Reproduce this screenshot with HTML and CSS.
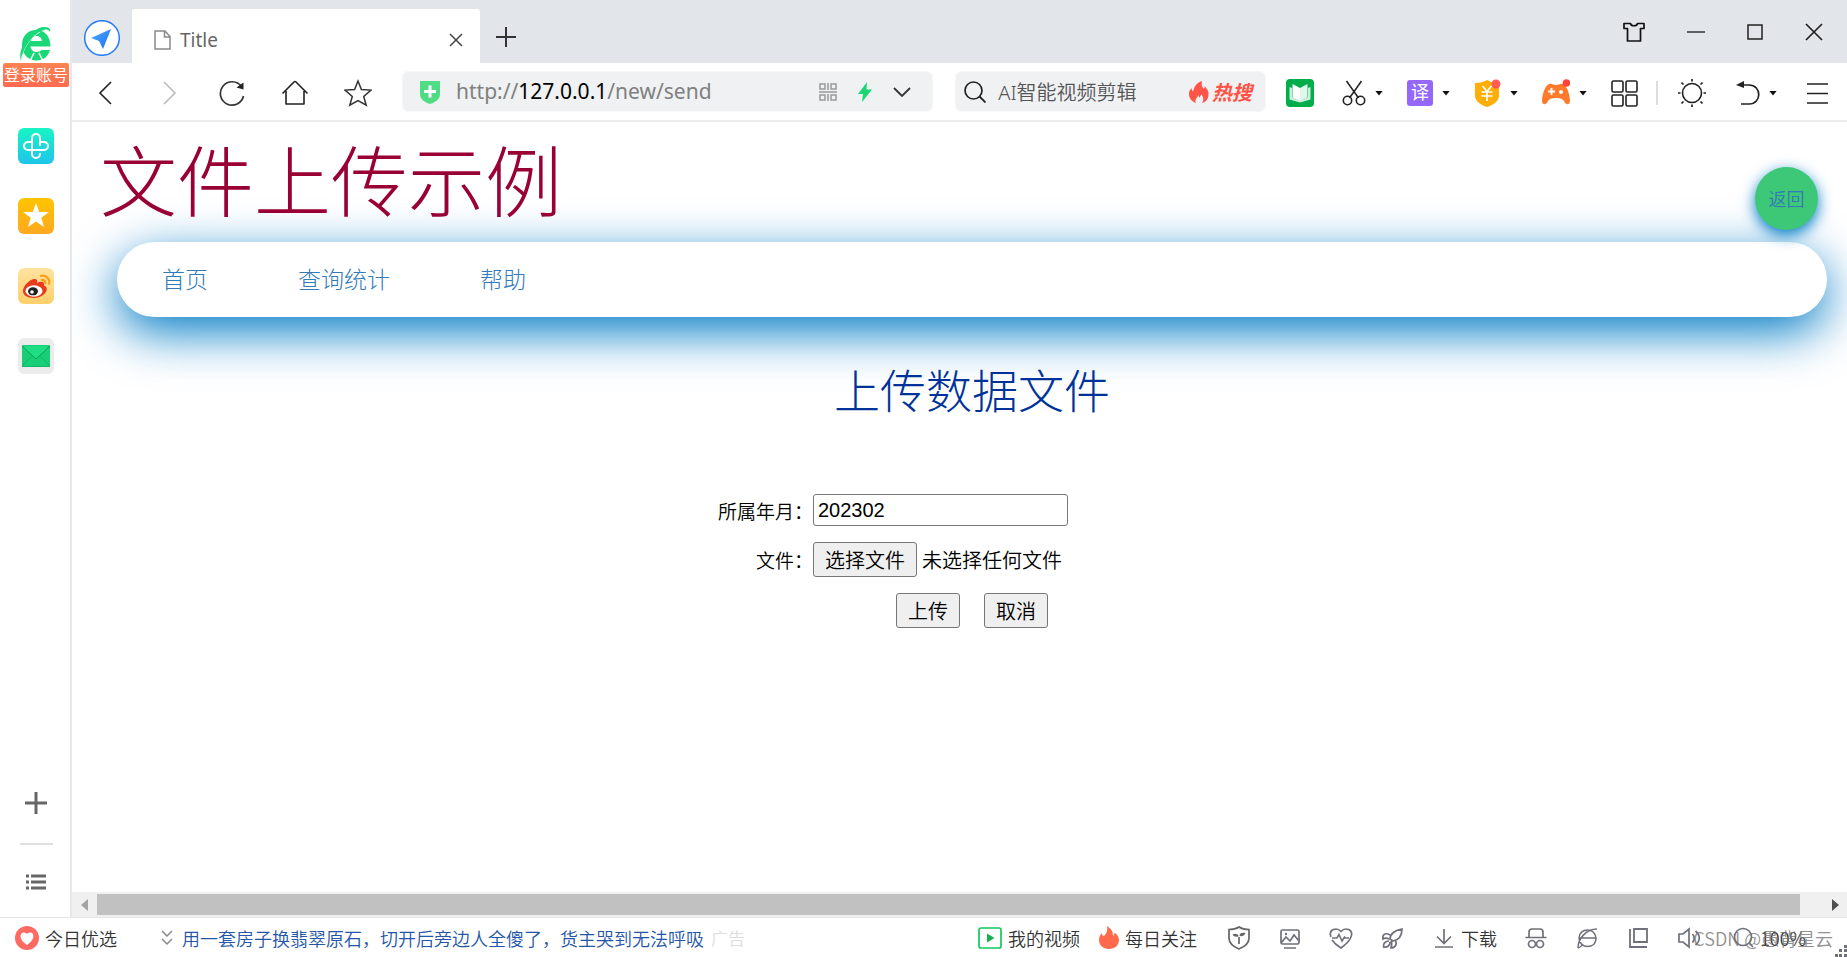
FILE: index.html
```html
<!DOCTYPE html>
<html lang="zh-CN">
<head>
<meta charset="utf-8">
<title>Title</title>
<link rel="stylesheet" href="styles.css">
</head>
<body>
<div class="browser">
  <aside class="side">
    <a class="account" href="#">
      <svg class="logo" width="36" height="36" viewBox="0 0 36 36"><path d="M4 19C4 10 10 4 18 4c8 0 14.500 5.500 14.500 16.500H12.500c.5 3.500 3 5.500 6 5.500 2.500 0 4-1 5-2H32C30 31 25 34.500 18.500 34.500 10 34.500 4 28 4 19Zm9-4h11c-.5-3.500-2.500-5-5.500-5S13.600 11.500 13 15Z" fill="#18d878"/><path d="M3.500 34C2 25 11 11 22 5" fill="none" stroke="#fff" stroke-width="2.500"/><path d="M3 35C-1 24 12 2 26 1c5-.3 7 2 6 5-1-2-3-3-6-2C15 7 4 23 3 35Z" fill="#18d878"/><path d="m16 27-4 8M21 27l4 8" stroke="#fff" stroke-width="1.500"/></svg>
      <span class="badge">登录账号</span>
    </a>
    <nav class="apps">
      <button class="app" aria-label="健康"><svg width="36" height="36" viewBox="0 0 36 36"><defs><linearGradient id="ga" x2="0" y2="1"><stop stop-color="#18f5c4"/><stop offset="1" stop-color="#1fc3ea"/></linearGradient></defs><rect width="36" height="36" rx="6" fill="url(#ga)"/><path d="M22 18V10a4 4 0 0 0-8 0v12H10a4 4 0 0 1 0-8h4M14 22h12a4 4 0 0 0 0-8h-4M14 18v8a4 4 0 0 0 8 0v-1" fill="none" stroke="#fff" stroke-width="2"/></svg></button>
      <button class="app" aria-label="收藏"><svg width="36" height="36" viewBox="0 0 36 36"><defs><linearGradient id="gb" x2="0" y2="1"><stop stop-color="#ffc400"/><stop offset="1" stop-color="#ffa820"/></linearGradient></defs><rect width="36" height="36" rx="6" fill="url(#gb)"/><path d="m18 5 3.200 9H31l-7.700 5.700L26 29l-8-5.600L10 29l2.700-9.300L5 14h9.800Z" fill="#fff"/></svg></button>
      <button class="app" aria-label="微博"><svg width="36" height="36" viewBox="0 0 36 36"><defs><linearGradient id="gc" x2="0" y2="1"><stop stop-color="#ffe3a0"/><stop offset="1" stop-color="#ffd06a"/></linearGradient></defs><rect width="36" height="36" rx="6" fill="url(#gc)"/><path d="M5 23c0-5 6-11 11-12 3-.5 4 1.500 3 4 4-2 8-1.500 7 2.500 6 2 2 12-10 12.500C9 30 5 27 5 23Z" fill="#e83a1c"/><ellipse cx="16" cy="23" rx="8.500" ry="5.800" fill="#fff"/><ellipse cx="15" cy="23.300" rx="5" ry="4" fill="#222"/><circle cx="14" cy="24" r="1.800" fill="#fff"/><path d="M22 8c6-1.500 10.500 3 9 8.500M23 12c3-.7 5 1.500 4.300 4" fill="none" stroke="#f4a21c" stroke-width="2.200"/></svg></button>
      <button class="app" aria-label="邮件"><svg width="36" height="36" viewBox="0 0 36 36"><rect width="36" height="36" rx="6" fill="#ececec"/><rect x="4" y="7" width="28" height="22" rx="1" fill="#18cf78"/><path d="M4 8h28L18 21Z" fill="#1fdd83"/><path d="m4 8 14 13L32 8" fill="none" stroke="#0a9e58" stroke-width="1"/><path d="m4 28 10-10M32 28 22 18M4 28.500h28" fill="none" stroke="#12b468" stroke-width="1"/></svg></button>
    </nav>
    <div class="side-tools">
      <button class="tool" aria-label="添加"><svg width="22" height="22" viewBox="0 0 22 22"><path d="M11 0v22M0 11h22" stroke="#666" stroke-width="3"/></svg></button>
      <hr class="rule">
      <button class="tool" aria-label="列表"><svg width="20" height="16" viewBox="0 0 20 16"><path d="M0 2h3M5 2h15M0 8h3M5 8h15M0 14h3M5 14h15" stroke="#666" stroke-width="3"/></svg></button>
    </div>
  </aside>

  <section class="window">
    <header class="tabs">
      <button class="guide" aria-label="导航"><svg width="36" height="36" viewBox="0 0 36 36"><defs><linearGradient id="gd" x2="1" y2="1"><stop stop-color="#4cb0ff"/><stop offset="1" stop-color="#1f6cf5"/></linearGradient></defs><circle cx="18" cy="18" r="17.300" fill="#fff" stroke="#2a7cf6" stroke-width="1.500"/><path d="M27 9 7 18l8 3 4 8Z" fill="url(#gd)"/></svg></button>
      <div class="tab">
        <svg width="17" height="20" viewBox="0 0 17 20"><path d="M1 1h10l5 5.500V19H1ZM10.500 1v6H16" fill="none" stroke="#8a8a8a" stroke-width="1.500"/></svg>
        <span class="tab-title">Title</span>
        <button aria-label="关闭标签"><svg width="14" height="14" viewBox="0 0 14 14"><path d="m1 1 12 12M13 1 1 13" stroke="#444" stroke-width="1.500"/></svg></button>
      </div>
      <button class="new-tab" aria-label="新标签"><svg width="20" height="20" viewBox="0 0 20 20"><path d="M10 0v20M0 10h20" stroke="#333" stroke-width="2"/></svg></button>
      <div class="win-buttons">
        <button aria-label="皮肤"><svg width="22" height="20" viewBox="0 0 22 20"><path d="M1 1.500h6.500c.5 3 6.500 3 7 0H21v5h-3.500V19h-13V6.500H1Z" fill="none" stroke="#111" stroke-width="1.700" stroke-linejoin="round"/></svg></button>
        <button aria-label="最小化"><svg width="18" height="18" viewBox="0 0 18 18"><path d="M0 9h18" stroke="#333" stroke-width="1.500"/></svg></button>
        <button aria-label="最大化"><svg width="16" height="16" viewBox="0 0 16 16"><path d="M1 1h14v14H1Z" fill="none" stroke="#222" stroke-width="1.500"/></svg></button>
        <button aria-label="关闭"><svg width="18" height="18" viewBox="0 0 18 18"><path d="m1 1 16 16M17 1 1 17" stroke="#222" stroke-width="1.700"/></svg></button>
      </div>
    </header>

    <div class="toolbar">
      <div class="history">
        <button aria-label="后退"><svg width="28" height="28" viewBox="0 0 28 28"><path d="M19 3 8 14l11 11" fill="none" stroke="#222" stroke-width="1.600"/></svg></button>
        <button aria-label="前进"><svg width="28" height="28" viewBox="0 0 28 28"><path d="m9 3 11 11L9 25" fill="none" stroke="#bbb" stroke-width="1.600"/></svg></button>
        <button aria-label="刷新"><svg width="28" height="28" viewBox="0 0 28 28"><path d="M23.500 7.500A11.700 11.700 0 1 0 25.500 17" fill="none" stroke="#333" stroke-width="1.700"/><path d="M25.500 3.500v7l-7-2Z" fill="#222"/></svg></button>
        <button aria-label="主页"><svg width="28" height="28" viewBox="0 0 28 28"><path d="M1.500 14.500 13 3q1-1 2 0l11.500 11.500M5 12v13h18V12" fill="none" stroke="#222" stroke-width="1.600" stroke-linejoin="round"/></svg></button>
        <button aria-label="收藏本页"><svg width="28" height="28" viewBox="0 0 28 28"><path d="m14 2 3.400 8.500 9.600.6-7.300 6.300 2.500 8.800L14 21.500l-8.200 4.700 2.500-8.800L1 11.100l9.600-.6Z" fill="none" stroke="#333" stroke-width="1.500"/></svg></button>
      </div>
      <div class="address">
        <svg width="22" height="24" viewBox="0 0 22 24"><path d="M1 1h20v13c0 5-4 8-10 10C5 22 1 19 1 14Z" fill="#4fdc84"/><path d="M11 5.500v12M5 11.500h12" stroke="#fff" stroke-width="3"/></svg>
        <div class="url" role="textbox" aria-label="地址">http://<b>127.0.0.1</b>/new/send</div>
        <div class="address-tools">
          <svg width="18" height="18" viewBox="0 0 18 18"><path d="M1 1h5v5H1ZM12 1h5v5h-5ZM1 12h5v5H1ZM12 12h5v5h-5ZM9 0v7M9 11v7M0 9h18" fill="none" stroke="#999" stroke-width="1.500"/></svg>
          <svg width="14" height="20" viewBox="0 0 14 20"><path d="M9 0 0 12h5L4 20l10-12.500H8.500Z" fill="#1bd673"/></svg>
          <svg width="18" height="10" viewBox="0 0 18 10"><path d="m1 1 8 8 8-8" fill="none" stroke="#333" stroke-width="1.800"/></svg>
        </div>
      </div>
      <div class="search">
        <svg width="22" height="22" viewBox="0 0 22 22"><circle cx="9.500" cy="9.500" r="8.500" fill="none" stroke="#222" stroke-width="1.700"/><path d="m15.500 15.500 6 6" stroke="#222" stroke-width="1.800"/></svg>
        <input class="search-text" aria-label="搜索" value="AI智能视频剪辑">
        <svg width="20" height="22" viewBox="0 0 20 22"><path d="M7 22C2 20 0 17 0 13c0-3 1-4.500 2.500-6 0 2 .7 3 1.700 3.500C5 6 7.500 1.500 13 0c-1 4 0 6 2 8 .5-1 .7-1.500.6-2.800C18 7.500 20 10.500 19.500 14c-.3 4-2.500 7-6.500 8 2-3 1.800-5.500-.8-9-.3 2-1 3-2 3.500-.2-1-.5-1.800-1.200-2.500C9 17 5 18 7 22Z" fill="#ff5548"/></svg>
        <a class="hot" href="#">热搜</a>
      </div>
      <div class="extras">
        <button aria-label="小说"><svg width="28" height="28" viewBox="0 0 28 28"><rect width="28" height="28" rx="4" fill="#04ad4c"/><path d="M3.500 8v12.500L14 23.500l10.500-3V8L22 9v9l-8 3-8-3V9Z" fill="#cdeedb"/><path d="m6.500 5 7.500 4v12.500l-7.500-3.300Z" fill="#fff"/><path d="M21.500 5 14 9v12.500l7.500-3.300Z" fill="#e2f6ea"/></svg></button>
        <div class="plugins">
          <button aria-label="截图"><svg width="24" height="26" viewBox="0 0 24 26"><path d="m4.500 1 12 17M19.500 1l-12 17" stroke="#222" stroke-width="1.500"/><g fill="none" stroke="#222" stroke-width="1.600"><circle cx="5.500" cy="20.500" r="4.200"/><circle cx="18.500" cy="20.500" r="4.200"/></g></svg><i class="caret"></i></button>
          <button aria-label="翻译"><span class="translate">译</span><i class="caret"></i></button>
          <button aria-label="优惠"><svg width="27" height="28" viewBox="0 0 27 28"><path d="M13 1c3 2 7 3 12 3v13c0 5-6 9-12 11C7 26 1 22 1 17V4c5 0 9-1 12-3Z" fill="#ffae05"/><path d="m8.500 7 4.500 5.500L17.500 7M7.500 13h11M7.500 17h11M13 12.500V22" fill="none" stroke="#fff" stroke-width="1.700"/><circle cx="22" cy="5" r="4.500" fill="#ff5c55"/></svg><i class="caret"></i></button>
          <button aria-label="游戏"><svg width="28" height="28" viewBox="0 0 28 28"><path d="M7 5c3-1 4 1 7 1s4-2 7-1c4 1.500 7 11 7 17 0 4-4 4-5.500 1S19 19 14 19s-7 1-8.500 4S0 26 0 22C0 16 3 6.500 7 5Z" fill="#ff7a2b"/><path d="M9.500 9v7M6 12.500h7" stroke="#fff" stroke-width="2"/><circle cx="19" cy="13" r="2" fill="#fff"/><circle cx="24.500" cy="4" r="3.800" fill="#ff4338"/></svg><i class="caret"></i></button>
          <button aria-label="扩展"><svg width="27" height="27" viewBox="0 0 27 27"><g fill="none" stroke="#222" stroke-width="1.600"><rect x="1" y="1" width="11" height="11" rx="1.500"/><rect x="15" y="1" width="11" height="11" rx="1.500"/><rect x="1" y="15" width="11" height="11" rx="1.500"/><rect x="15" y="15" width="11" height="11" rx="1.500"/></g></svg></button>
        </div>
        <span class="divider"></span>
        <div class="actions">
          <button aria-label="亮度"><svg width="28" height="28" viewBox="0 0 28 28"><circle cx="14" cy="14" r="9.500" fill="none" stroke="#222" stroke-width="1.600"/><path d="M14 0v2.500M14 25.500V28M0 14h2.500M25.500 14H28M3.500 3.500l2 2M22.500 22.500l2 2M24.500 3.500l-2 2M5.500 22.500l-2 2" stroke="#222" stroke-width="1.700"/></svg></button>
          <button aria-label="恢复"><svg width="24" height="26" viewBox="0 0 24 26"><path d="M4 5h9c13 0 13 19 0 19H5" fill="none" stroke="#222" stroke-width="1.700"/><path d="M0 5 8 1v7Z" fill="#222"/></svg><i class="caret"></i></button>
          <button aria-label="菜单"><svg width="21" height="21" viewBox="0 0 21 21"><path d="M0 1h21M0 10.500h21M0 20h21" stroke="#222" stroke-width="1.600"/></svg></button>
        </div>
      </div>
    </div>

    <main class="page">
      <h1 class="headline">文件上传示例</h1>
      <a class="back" href="#">返回</a>
      <nav class="menu">
        <a href="#">首页</a>
        <a href="#">查询统计</a>
        <a href="#">帮助</a>
      </nav>
      <h2 class="subtitle">上传数据文件</h2>
      <form class="upload">
        <label for="month">所属年月：</label>
        <div class="field"><input class="month" id="month" type="text" value="202302"></div>
        <label for="choose">文件：</label>
        <div class="field"><button class="btn" id="choose" type="button">选择文件</button><span>未选择任何文件</span></div>
        <div class="submit"><button class="btn" type="button">上传</button><button class="btn" type="reset">取消</button></div>
      </form>
    </main>

    <div class="scroll">
      <svg width="7" height="12" viewBox="0 0 7 12"><path d="M7 0v12L0 6Z" fill="#a3a3a3"/></svg>
      <span class="thumb"></span>
      <svg width="7" height="12" viewBox="0 0 7 12"><path d="M0 0v12l7-6Z" fill="#505050"/></svg>
    </div>
  </section>
</div>

<footer class="status">
  <a class="pick" href="#"><svg width="24" height="24" viewBox="0 0 24 24"><circle cx="12" cy="12" r="12" fill="#ff6b63"/><path d="M12 19C2 12 6 6 9 6.500c2 0 3 1.500 3 2 0-.5 1-2 3-2 3-.5 7 5.500-3 12.500Z" fill="#fff"/></svg>今日优选</a>
  <a class="news" href="#"><svg width="12" height="16" viewBox="0 0 12 16"><path d="m1 1 5 5 5-5M1 9l5 5 5-5" fill="none" stroke="#888" stroke-width="1.500"/></svg>用一套房子换翡翠原石，切开后旁边人全傻了，货主哭到无法呼吸</a>
  <span class="ad">广告</span>
  <div class="feeds">
    <a href="#"><svg width="24" height="22" viewBox="0 0 24 22"><rect x="1" y="1" width="22" height="20" rx="2" fill="none" stroke="#12c95c" stroke-width="1.700"/><path d="m9 6.500 7.500 4.500L9 15.500Z" fill="#12b050"/></svg>我的视频</a>
    <a href="#"><svg width="20" height="23" viewBox="0 0 20 23"><path d="M8 0c5 3 6 6 6 10 1-1 1.500-2 1.500-3.500C18 8 20 11 20 14c0 5-4 9-10 9S0 19 0 14c0-3 1-5 3-7 0 2 .5 3 2 3 2-2 4-5 3-10Z" fill="#ff6a4d"/></svg>每日关注</a>
  </div>
  <div class="gadgets">
    <button aria-label="防护"><svg width="24" height="24" viewBox="0 0 24 24"><path d="M12 1c3 2 6 2.500 10 2.500V12c0 5-4 8.500-10 11C6 20.500 2 17 2 12V3.500C6 3.500 9 3 12 1Z" fill="none" stroke="#666" stroke-width="1.700"/><path d="M12 18v-7" stroke="#666" stroke-width="1.700"/><path d="M5.500 8.500c3-1.500 6-.5 6 2-3 .5-5 0-6-2ZM18.500 7C15 6 12.500 7 12.500 10c3 .5 5.500-.5 6-3Z" fill="#666"/></svg></button>
    <button aria-label="图片"><svg width="24" height="24" viewBox="0 0 24 24"><rect x="3" y="4" width="18" height="14" rx="1.500" fill="none" stroke="#70707a" stroke-width="1.700"/><path d="m3 17 5-6 4 4 4-6 5 6M6 22h12" fill="none" stroke="#70707a" stroke-width="1.700"/><circle cx="8" cy="8" r="1.200" fill="#70707a"/></svg></button>
    <button aria-label="体检"><svg width="24" height="24" viewBox="0 0 24 24"><path d="M2 11C-1 3 8 1 12 5.500 16 1 25 3 22 11c-1.500 4-6 8-10 11-4-2.500-7-5-9-8M3 12h5l2-3.500 3 6.500 2.500-4 1 1H20" fill="none" stroke="#70707a" stroke-width="1.600"/></svg></button>
    <button aria-label="加速"><svg width="24" height="24" viewBox="0 0 24 24"><path d="M10 13C10 8 15 4 22 3c0 7-4 11-9 12ZM10 9C5 6 2 9 3 13c2-1.500 4-1 6 0M15 14c3 4 0 8-4 8 1-3 1-5 0-7M9 15c-4 0-6 3-5.500 6C7 21.500 10 20 10 16" fill="none" stroke="#70707a" stroke-width="1.700"/></svg></button>
  </div>
  <a class="download" href="#"><svg width="18" height="20" viewBox="0 0 18 20"><path d="M9 1v14M2 8.500 9 15.500l7-7M0 19h18" fill="none" stroke="#70707a" stroke-width="1.700"/></svg>下载</a>
  <div class="gadgets modes">
    <button aria-label="无痕"><svg width="24" height="24" viewBox="0 0 24 24"><path d="M1.500 11.500h21M5 11V6q0-3 3-3h8q3 0 3 3v5" fill="none" stroke="#70707a" stroke-width="1.700"/><circle cx="8" cy="18" r="3.500" fill="none" stroke="#70707a" stroke-width="1.700"/><circle cx="16" cy="18" r="3.500" fill="none" stroke="#70707a" stroke-width="1.700"/></svg></button>
    <button aria-label="内核"><svg width="24" height="24" viewBox="0 0 24 24"><path d="M4 12h17c0 6-4 8.500-8.500 8.500S4 17 4 12s4-8 8.500-8 7.500 2 8.500 8M3 22C3 13 11 3 22 3M3 22c2-.5 3-1 4-3" fill="none" stroke="#70707a" stroke-width="1.500"/></svg></button>
    <button aria-label="窗口"><svg width="24" height="24" viewBox="0 0 24 24"><path d="M8 3h13v13H8ZM4 3v18h17" fill="none" stroke="#70707a" stroke-width="1.800"/></svg></button>
    <button aria-label="声音"><svg width="24" height="24" viewBox="0 0 24 24"><path d="M2 8h4l6-5v18l-6-5H2ZM15.500 8c2 2.500 2 6 0 8.500M18.500 5c5 4 5 10 0 14" fill="none" stroke="#70707a" stroke-width="1.700"/></svg></button>
  </div>
  <button class="zoom"><svg width="22" height="22" viewBox="0 0 22 22"><circle cx="10" cy="10" r="8.500" fill="none" stroke="#70707a" stroke-width="1.700"/><path d="m16 16 4 4" stroke="#70707a" stroke-width="1.700"/></svg>100%</button>
  <span class="mark">CSDN @愚背星云</span>
  <svg class="grip" width="12" height="12" viewBox="0 0 12 12"><path d="M9 0h3v3H9ZM4 4h3v3H4ZM9 4h3v3H9ZM0 9h3v3H0ZM4 9h3v3H4ZM9 9h3v3H9Z" fill="#70707a"/></svg>
</footer>
</body>
</html>
```

FILE: styles.css
```css
* {
  box-sizing: border-box;
}

body {
  margin: 0;
  min-height: 100vh;
  display: flex;
  flex-direction: column;
  overflow: hidden;
  background: #fff;
  color: #333;
  font-family: "Noto Sans", "Noto Sans CJK SC", sans-serif;
  font-size: 18px;
}

svg {
  display: block;
  flex: none;
}

button {
  display: flex;
  align-items: center;
  margin: 0;
  padding: 0;
  border: 0;
  background: none;
  color: inherit;
  font: inherit;
}

a {
  color: inherit;
  text-decoration: none;
}

.browser {
  flex: 1;
  display: flex;
}

/* left rail */
.side {
  width: 72px;
  flex: none;
  display: flex;
  flex-direction: column;
  align-items: center;
  padding-left: 2px;
  border-right: 2px solid #e8e8e8;
}

.account {
  display: flex;
  flex-direction: column;
  align-items: center;
  padding-top: 26px;
}

.badge {
  margin-top: 1px;
  width: 66px;
  height: 24px;
  border-radius: 2px;
  background: linear-gradient(#ff8352, #ff6a50);
  color: #fff;
  font-family: "Noto Sans CJK SC", sans-serif;
  font-size: 16px;
  line-height: 23px;
  text-align: center;
}

.apps {
  margin-top: 41px;
  display: grid;
  gap: 34px;
}

.side-tools {
  margin-top: auto;
  padding-bottom: 27px;
  display: flex;
  flex-direction: column;
  align-items: center;
  gap: 29px;
}

.rule {
  width: 33px;
  height: 2px;
  margin: 0;
  border: 0;
  background: #e0e0e0;
}

/* tab strip */
.window {
  flex: 1;
  min-width: 0;
  display: flex;
  flex-direction: column;
}

.tabs {
  height: 63px;
  display: flex;
  padding: 9px 24px 0 12px;
  background: #e2e5ea;
}

.guide {
  align-self: flex-start;
  margin-top: 11px;
}

.tab {
  width: 348px;
  margin-left: 12px;
  padding: 7px 17px 0 22px;
  display: flex;
  align-items: center;
  border-radius: 3px 3px 0 0;
  background: #fff;
}

.tab-title {
  flex: 1;
  margin-left: 9px;
  color: #666;
  font-size: 19px;
}

.new-tab {
  margin-left: 16px;
  padding-top: 2px;
}

.win-buttons {
  margin-left: auto;
  height: 46px;
  display: flex;
  align-items: center;
  gap: 42px;
}

/* toolbar */
.toolbar {
  height: 59px;
  display: flex;
  align-items: center;
  padding: 0 19px 0 20px;
  border-bottom: 2px solid #ececec;
}

.history {
  display: flex;
  gap: 35px;
  padding-top: 3px;
}

.address,
.search {
  height: 41px;
  display: flex;
  align-items: center;
  border: 1px solid #f6f7f8;
  border-radius: 6px;
  background: #eff1f3;
  background-clip: padding-box;
}

.address {
  flex: 532 1 0;
  margin-left: 30px;
  padding: 0 21px 0 16px;
}

.url {
  flex: 1;
  margin-left: 15px;
  padding-bottom: 2px;
  color: #808080;
  font-size: 21px;
  white-space: nowrap;
}

.url b {
  color: #000;
  font-weight: 400;
}

.address-tools {
  display: flex;
  align-items: center;
  gap: 21px;
}

.search {
  flex: 311 1 0;
  min-width: 0;
  margin-left: 22px;
  padding: 0 13px 0 8px;
}

.search-text {
  flex: 1;
  min-width: 0;
  margin-left: 12px;
  padding: 0;
  border: 0;
  background: none;
  color: #555;
  font-family: "Noto Sans", "Noto Sans CJK SC", sans-serif;
  font-size: 20px;
  font-weight: 350;
}

.hot {
  margin-left: 3px;
  color: #ff5245;
  font-size: 20px;
  font-style: italic;
  font-weight: 700;
}

.extras {
  display: flex;
  align-items: center;
  margin-left: 20px;
  padding-top: 3px;
}

.plugins {
  display: flex;
  align-items: center;
  gap: 24px;
  margin-left: 28px;
}

.plugins button,
.actions button {
  gap: 9px;
}

.caret {
  width: 8px;
  height: 5px;
  background: #111;
  clip-path: polygon(0 0, 100% 0, 50% 100%);
}

.translate {
  width: 26px;
  height: 26px;
  border-radius: 3px;
  background: #9468fb;
  color: #fff;
  font-size: 18px;
  line-height: 25px;
  text-align: center;
}

.divider {
  width: 2px;
  height: 24px;
  margin: 0 20px 0 18px;
  background: #ddd;
}

.actions {
  display: flex;
  align-items: center;
  gap: 30px;
}

/* web page */
.page {
  position: relative;
  flex: 1;
  overflow: hidden;
  padding: 0 20px 0 45px;
  font-family: "Noto Sans CJK SC", sans-serif;
  font-weight: 300;
}

.headline {
  margin: 0 -17px;
  height: 120px;
  color: #903;
  font-size: 77px;
  font-weight: 300;
  line-height: 112px;
}

.back {
  position: absolute;
  z-index: 1;
  top: 45px;
  right: 29px;
  width: 63px;
  height: 63px;
  border-radius: 50%;
  background: #3dc878;
  box-shadow: 0 5px 15px #007bc5;
  color: #337ab7;
  font-size: 18px;
  font-weight: 350;
  line-height: 62px;
  text-align: center;
}

.menu {
  height: 75px;
  display: flex;
  align-items: center;
  gap: 90px;
  padding: 0 45px 3px;
  border-radius: 38px;
  background: #fff;
  box-shadow: 0 15px 50px #007bc5;
  color: #337ab7;
  font-size: 23px;
}

.subtitle {
  position: relative;
  margin: 37px 0 72px;
  color: #039;
  font-size: 46px;
  font-weight: 300;
  line-height: 68px;
  text-align: center;
}

.upload {
  display: grid;
  grid-template-columns: 95px 413px;
  justify-content: center;
  align-items: center;
  row-gap: 16px;
  color: #000;
  font-size: 19px;
  font-weight: 350;
}

.upload label {
  justify-self: end;
  white-space: nowrap;
}

.field {
  display: flex;
  align-items: center;
  gap: 5px;
  font-size: 20px;
}

.month {
  width: 255px;
  height: 32px;
  padding: 0 4px;
  border: 1px solid #767676;
  border-radius: 3px;
  font-family: "Liberation Sans", sans-serif;
  font-size: 20px;
}

.btn {
  height: 35px;
  padding: 0 11px;
  border: 1px solid #767676;
  border-radius: 3px;
  background: #efefef;
  color: #000;
  font-size: 20px;
}

.submit {
  grid-column: 1 / -1;
  display: flex;
  justify-content: center;
  gap: 24px;
}

.scroll {
  height: 25px;
  display: flex;
  align-items: center;
  padding: 0 8px 0 9px;
  background: #f0f0f0;
}

.thumb {
  flex: 1;
  height: 21px;
  margin: 0 32px 0 9px;
  background: #c1c1c1;
}

/* status bar */
.status {
  position: relative;
  height: 40px;
  display: flex;
  align-items: center;
  padding: 0 41px 0 15px;
  border-top: 1px solid #e6e6e6;
  font-family: "Noto Sans CJK SC", sans-serif;
  font-weight: 350;
  white-space: nowrap;
}

.status a {
  display: flex;
  align-items: center;
  gap: 6px;
}

.status .news {
  gap: 9px;
  margin-left: 44px;
  color: #2456a8;
}

.ad {
  margin-left: 7px;
  color: #ddd;
  font-size: 17px;
}

.feeds {
  display: flex;
  gap: 19px;
  margin-left: auto;
}

.gadgets {
  display: flex;
  gap: 27px;
  margin-left: 30px;
}

.status .download {
  gap: 8px;
  margin-left: 31px;
}

.modes {
  margin-left: 27px;
  gap: 27px;
}

.zoom {
  gap: 5px;
  margin-left: 32px;
}

.mark {
  position: absolute;
  right: 14px;
  top: 7px;
  color: #777;
  font-size: 18px;
  opacity: 0.8;
}

.grip {
  position: absolute;
  right: 0;
  bottom: 0;
}
```
